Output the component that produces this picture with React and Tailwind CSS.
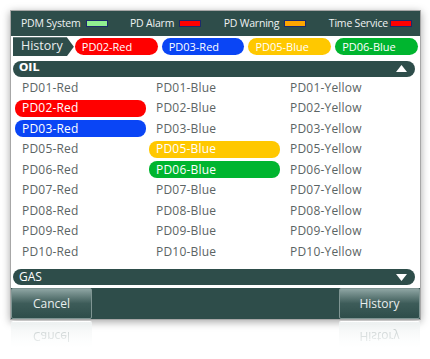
import React from "react";

const dark = "bg-[#2e4d4a]";

const cols = [
  ["PD01-Red", "PD02-Red", "PD03-Red", "PD05-Red", "PD06-Red", "PD07-Red", "PD08-Red", "PD09-Red", "PD10-Red"],
  ["PD01-Blue", "PD02-Blue", "PD03-Blue", "PD05-Blue", "PD06-Blue", "PD07-Blue", "PD08-Blue", "PD09-Blue", "PD10-Blue"],
  ["PD01-Yellow", "PD02-Yellow", "PD03-Yellow", "PD05-Yellow", "PD06-Yellow", "PD07-Yellow", "PD08-Yellow", "PD09-Yellow", "PD10-Yellow"],
];

const hi = {
  "PD02-Red": "bg-[#ff0000]",
  "PD03-Red": "bg-[#0a45f5]",
  "PD05-Blue": "bg-[#ffc800]",
  "PD06-Blue": "bg-[#00b52f]",
};

function Swatch({ color }) {
  return <span className={`inline-block w-[22px] h-[7px] border border-[#1c2a6b] ${color}`} />;
}

function Btn({ label, reflect }) {
  return (
    <div
      className={`w-[81px] h-[31px] flex items-center justify-center rounded-[2px] border text-[12px] ${
        reflect
          ? "scale-y-[-1] border-transparent text-[#b8c2c2] bg-gradient-to-t from-[#eef2f2] to-white"
          : "border-[#7f9593] text-[#e9eeee] bg-gradient-to-b from-[#8ea5a3] via-[#3d5c59] to-[#2e4d4a]"
      }`}
    >
      {label}
    </div>
  );
}

export default function App() {
  return (
    <div className="w-[430px] h-[359px] bg-white relative" style={{ fontFamily: "'Open Sans', sans-serif" }}>
      <div className="absolute left-[10px] top-[10px] w-[411px] h-[310px] border border-[#a7a7a7] bg-white shadow-[0_2px_8px_rgba(0,0,0,0.35)] flex flex-col">
        {/* top bar */}
        <div className={`${dark} h-[26px] flex items-center justify-between pl-[10px] pr-[8px] text-[10.5px] tracking-[-0.2px] text-[#eef2f2]`}>
          <div className="flex items-center gap-[5px]"><span>PDM System</span><Swatch color="bg-[#90ee90]" /></div>
          <div className="flex items-center gap-[5px]"><span>PD Alarm</span><Swatch color="bg-[#ff0000]" /></div>
          <div className="flex items-center gap-[5px]"><span>PD Warning</span><Swatch color="bg-[#ffa500]" /></div>
          <div className="flex items-center gap-[2px]"><span>Time Service</span><Swatch color="bg-[#ff0000]" /></div>
        </div>
        {/* history row */}
        <div className="h-[20px] flex items-center px-[2px] gap-[4px] mt-[1px] text-[11px] text-white">
          <div className={`${dark} h-[19px] w-[61px] flex items-center pl-[8px] text-[12.5px] text-[#e9eeee] [clip-path:polygon(0_0,calc(100%-7px)_0,100%_50%,calc(100%-7px)_100%,0_100%)]`}>History</div>
          <div className="ml-[-3px] w-[83px] h-[17px] rounded-full bg-[#ff0000] flex items-center pl-[7px]">PD02-Red</div>
          <div className="w-[83px] h-[17px] rounded-full bg-[#0a45f5] flex items-center pl-[7px]">PD03-Red</div>
          <div className="w-[83px] h-[17px] rounded-full bg-[#ffc800] flex items-center pl-[7px]">PD05-Blue</div>
          <div className="w-[83px] h-[17px] rounded-full bg-[#00b52f] flex items-center pl-[7px]">PD06-Blue</div>
        </div>
        {/* OIL header */}
        <div className={`${dark} mt-[4px] mx-[2px] mr-[5px] h-[16px] rounded-full flex items-center justify-between pl-[6px] pr-[8px] text-[11px] text-white font-bold`} style={{ fontFamily: "'DejaVu Sans', sans-serif" }}>
          <span>OIL</span>
          <svg width="11" height="7" viewBox="0 0 11 7"><path d="M0 7 L5.5 0 L11 7 Z" fill="#ffffff" /></svg>
        </div>
        {/* list */}
        <div className="grid grid-cols-[134px_134px_134px] pl-[4px] mt-[1px] text-[12px] text-[#5b6464] tracking-[0.2px]">
          {cols.map((col, ci) => (
            <div key={ci} className="flex flex-col">
              {col.map((t) => (
                <div key={t} className="h-[20.5px] flex items-center">
                  {hi[t] ? (
                    <div className={`${hi[t]} w-[131px] h-[17px] rounded-[8px] flex items-center pl-[7px] text-white`}>{t}</div>
                  ) : (
                    <div className="pl-[7px]">{t}</div>
                  )}
                </div>
              ))}
            </div>
          ))}
        </div>
        {/* GAS header */}
        <div className={`${dark} mt-[7px] mx-[2px] mr-[5px] h-[16px] rounded-full flex items-center justify-between pl-[6px] pr-[8px] text-[12px] text-white`}>
          <span>GAS</span>
          <svg width="11" height="7" viewBox="0 0 11 7"><path d="M0 0 L11 0 L5.5 7 Z" fill="#ffffff" /></svg>
        </div>
        {/* bottom bar */}
        <div className={`${dark} mt-[3px] h-[32px] flex justify-between items-start`}>
          <Btn label="Cancel" />
          <Btn label="History" />
        </div>
      </div>
      {/* reflection */}
      <div className="absolute left-[11px] top-[321px] w-[409px] flex justify-between [mask-image:linear-gradient(to_bottom,black,transparent)]">
        <Btn label="Cancel" reflect />
        <Btn label="History" reflect />
      </div>
    </div>
  );
}
